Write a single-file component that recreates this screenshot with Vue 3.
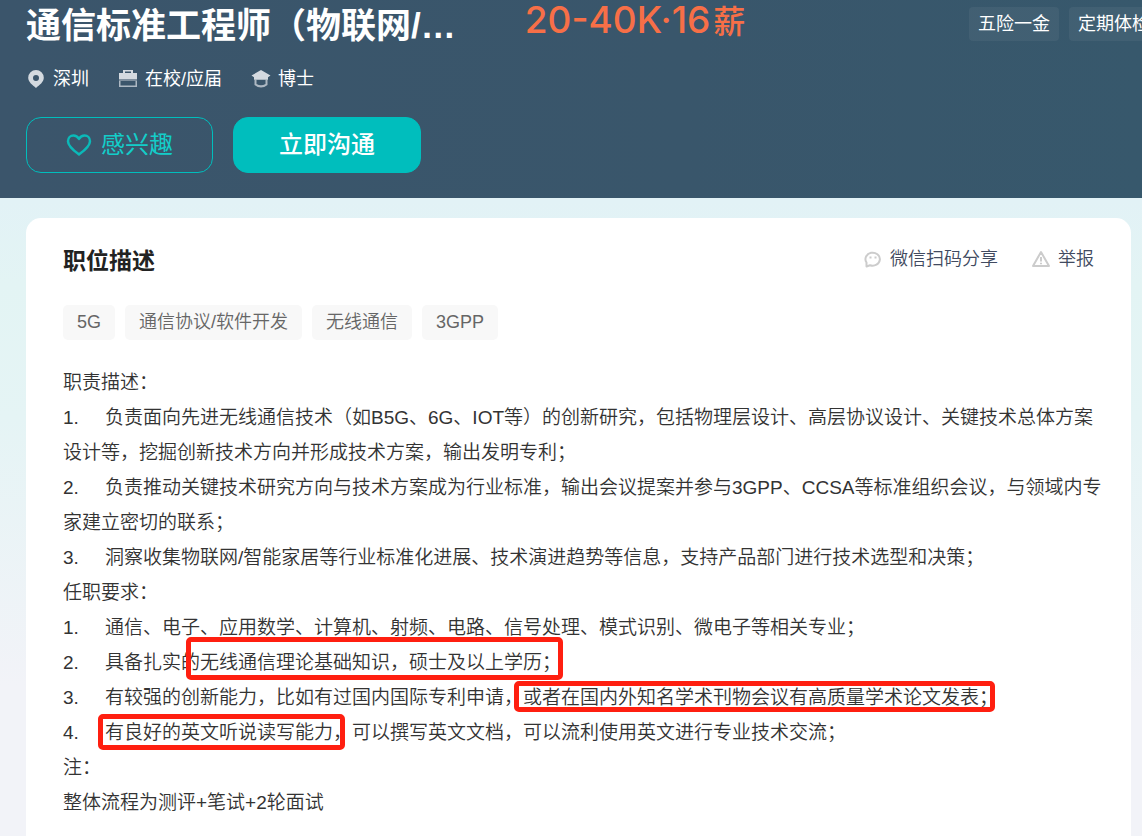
<script setup>
const benefits = ['五险一金', '定期体检']
const tags = ['5G', '通信协议/软件开发', '无线通信', '3GPP']
const lines = [
  { parts: [{ t: '职责描述：' }] },
  { n: '1.', parts: [{ t: '负责面向先进无线通信技术（如B5G、6G、IOT等）的创新研究，包括物理层设计、高层协议设计、关键技术总体方案设计等，挖掘创新技术方向并形成技术方案，输出发明专利；' }] },
  { n: '2.', parts: [{ t: '负责推动关键技术研究方向与技术方案成为行业标准，输出会议提案并参与3GPP、CCSA等标准组织会议，与领域内专家建立密切的联系；' }] },
  { n: '3.', parts: [{ t: '洞察收集物联网/智能家居等行业标准化进展、技术演进趋势等信息，支持产品部门进行技术选型和决策；' }] },
  { parts: [{ t: '任职要求：' }] },
  { n: '1.', parts: [{ t: '通信、电子、应用数学、计算机、射频、电路、信号处理、模式识别、微电子等相关专业；' }] },
  { n: '2.', parts: [{ t: '具备扎实的' }, { t: '无线通信理论基础知识，硕士及以上学历；', mark: 'degree' }] },
  { n: '3.', parts: [{ t: '有较强的创新能力，比如有过国内国际专利申请，' }, { t: '或者在国内外知名学术刊物会议有高质量学术论文发表；', mark: 'paper' }] },
  { n: '4.', parts: [{ t: '有良好的英文听说读写能力，', mark: 'english' }, { t: '可以撰写英文文档，可以流利使用英文进行专业技术交流；' }] },
  { parts: [{ t: '注：' }] },
  { parts: [{ t: '整体流程为测评+笔试+2轮面试' }] },
]
</script>

<template>
  <div class="page" lang="zh-CN">
    <header class="banner">
      <div class="headline">
        <h1>通信标准工程师（物联网/…</h1>
        <p class="salary">20-40K·16<span>薪</span></p>
        <ul class="benefits">
          <li v-for="b in benefits" :key="b">{{ b }}</li>
        </ul>
      </div>
      <ul class="facts">
        <li>
          <svg viewBox="0 0 20 20" aria-hidden="true"><path fill-rule="evenodd" d="M10 1a7.800 7.800 0 0 0-7.800 7.800C2.200 13.200 6.500 16 10 19c3.500-3 7.800-5.800 7.800-10.200A7.800 7.800 0 0 0 10 1zm0 5a3 3 0 1 1 0 6 3 3 0 0 1 0-6z" /></svg>
          深圳
        </li>
        <li>
          <svg viewBox="0 0 20 20" aria-hidden="true"><path fill-rule="evenodd" d="M5 1h10v3h4v6H1V4h4zm2 1.500V4h6V2.500z" /><path opacity=".45" d="M1 10h18v2H1z" /><path opacity=".75" fill-rule="evenodd" d="M1 12h18v6H1zm1.500 0v4.500h15V12z" /></svg>
          在校/应届
        </li>
        <li>
          <svg viewBox="0 0 20 20" aria-hidden="true"><path d="M10 1l9.500 5.500-2.500 1.800v2.500H3V8.300L.5 6.500z" /><path opacity=".75" d="M3.500 10.800h2V15q4.500 2.500 9 0v-4.200h2V16q-6.500 5-13 0z" /></svg>
          博士
        </li>
      </ul>
      <div class="actions">
        <button type="button" class="like">
          <svg viewBox="0 0 26 24" aria-hidden="true"><path d="M13 21.500C9 18.500 2 13.500 2 8.200 2 4.800 4.500 2.500 7.400 2.500c2.400 0 4.300 1.200 5.600 3.400 1.300-2.200 3.200-3.400 5.600-3.400 2.900 0 5.400 2.300 5.400 5.700 0 5.300-7 10.300-11 13.300z" /></svg>
          <span>感兴趣</span>
        </button>
        <button type="button" class="chat"><span>立即沟通</span></button>
      </div>
    </header>

    <main class="card">
      <div class="card-head">
        <h2>职位描述</h2>
        <nav>
          <a href="#share">
            <svg viewBox="0 0 18 18" aria-hidden="true"><path d="M2.500 16.500V12.500A7.200 6.500 0 1 1 6 15.200z" /><path d="M6.500 6.500v2M11.500 6.500v2" /></svg>
            微信扫码分享
          </a>
          <a href="#report">
            <svg viewBox="0 0 18 18" aria-hidden="true"><path d="M9 2L17 16H1z" /><path d="M9 7v4.500M9 12.700v1.600" /></svg>
            举报
          </a>
        </nav>
      </div>
      <ul class="tags">
        <li v-for="t in tags" :key="t">{{ t }}</li>
      </ul>
      <div class="description">
        <p v-for="(line, i) in lines" :key="i"><span v-if="line.n" class="num">{{ line.n }}</span><span v-for="(p, j) in line.parts" :key="j" :class="p.mark && ['mark', p.mark]">{{ p.t }}</span></p>
      </div>
    </main>
  </div>
</template>

<style>
body {
  margin: 0;
  background: #f1f2f7;
}
</style>

<style scoped>
.page {
  display: flex;
  flex-direction: column;
  min-height: 100vh;
  background: linear-gradient(#e2f2f6 24%, #e3f4f4 34%, #e5f4f5 50%, #f2f3f8 82%);
  font-family: "Liberation Sans", "Noto Sans CJK SC", sans-serif;
  font-size: 18px;
}
h1, h2, p, ul {
  margin: 0;
  padding: 0;
  list-style: none;
}
.banner {
  padding: 0 0 25px 26px;
  overflow: hidden;
  color: #fff;
  background: linear-gradient(90deg, #3b556b, #39566b 60%, #37586c);
}
.headline {
  display: flex;
  align-items: flex-start;
  height: 48px;
}
h1 {
  flex: none;
  font-size: 35px;
  line-height: 51px;
  font-weight: 700;
}
.salary {
  flex: none;
  margin-left: 69px;
  color: #f76f47;
  font: 500 37px/40px Inter, "Noto Sans CJK SC", sans-serif;
  white-space: nowrap;
}
.salary span {
  margin-left: 3px;
  font-size: 32px;
}
.benefits {
  display: flex;
  flex: none;
  gap: 10px;
  margin: 7px -17px 0 auto;
}
.benefits li {
  padding: 0 9px;
  border-radius: 4px;
  background: rgba(255, 255, 255, .05);
  line-height: 34px;
}
.facts {
  display: flex;
  gap: 29px;
  padding: 15px 0 22px;
}
.facts li {
  display: flex;
  align-items: center;
  gap: 7px;
  line-height: 32px;
}
.facts svg {
  width: 20px;
  height: 20px;
  fill: #d4dae0;
}
.actions {
  display: flex;
  gap: 20px;
}
.actions button {
  display: flex;
  align-items: center;
  justify-content: center;
  gap: 9px;
  box-sizing: border-box;
  width: 187px;
  height: 56px;
  padding: 0;
  border: 1px solid #00bebd;
  border-radius: 15px;
  font: inherit;
  font-size: 24px;
}
.actions span {
  padding-bottom: 6px;
}
.actions .like {
  color: #13cdc9;
  background: transparent;
}
.like svg {
  width: 26px;
  height: 24px;
  fill: none;
  stroke: #0bb9b8;
  stroke-width: 2.500;
  stroke-linejoin: round;
}
.actions .chat {
  width: 188px;
  color: #fff;
  background: #00bebd;
  font-weight: 500;
}
.card {
  flex: 1;
  margin: 20px 11px 0 26px;
  padding: 26px 28px 16px 37px;
  border-radius: 15px 15px 0 0;
  background: #fff;
}
.card-head {
  display: flex;
  align-items: flex-start;
  justify-content: space-between;
  padding-right: 9px;
}
h2 {
  color: #222;
  font-size: 23px;
  line-height: 34px;
}
nav {
  display: flex;
  gap: 34px;
}
nav a {
  display: flex;
  align-items: center;
  gap: 8px;
  color: #414a60;
  font-weight: 350;
  line-height: 30px;
  text-decoration: none;
}
nav svg {
  width: 18px;
  height: 18px;
  fill: none;
  stroke: #ccc;
  stroke-width: 2;
  stroke-linejoin: round;
}
.tags {
  display: flex;
  gap: 10px;
  padding: 27px 0 25px;
}
.tags li {
  padding: 0 14px;
  border-radius: 5px;
  color: #666;
  background: #f8f8f8;
  font-weight: 350;
  line-height: 35px;
}
.description {
  color: #333;
  font-size: 19px;
  font-weight: 350;
  line-height: 35px;
}
.num {
  display: inline-block;
  width: 42px;
}
.mark {
  position: relative;
}
.mark::after {
  content: "";
  position: absolute;
  border: 5px solid #ff1f10;
  border-radius: 5px;
}
.degree::after {
  inset: -15px -2px -7px -14px;
}
.paper::after {
  inset: -6px 3px -4px -9px;
}
.english::after {
  inset: -8px 7px -7px -7px;
}
</style>
